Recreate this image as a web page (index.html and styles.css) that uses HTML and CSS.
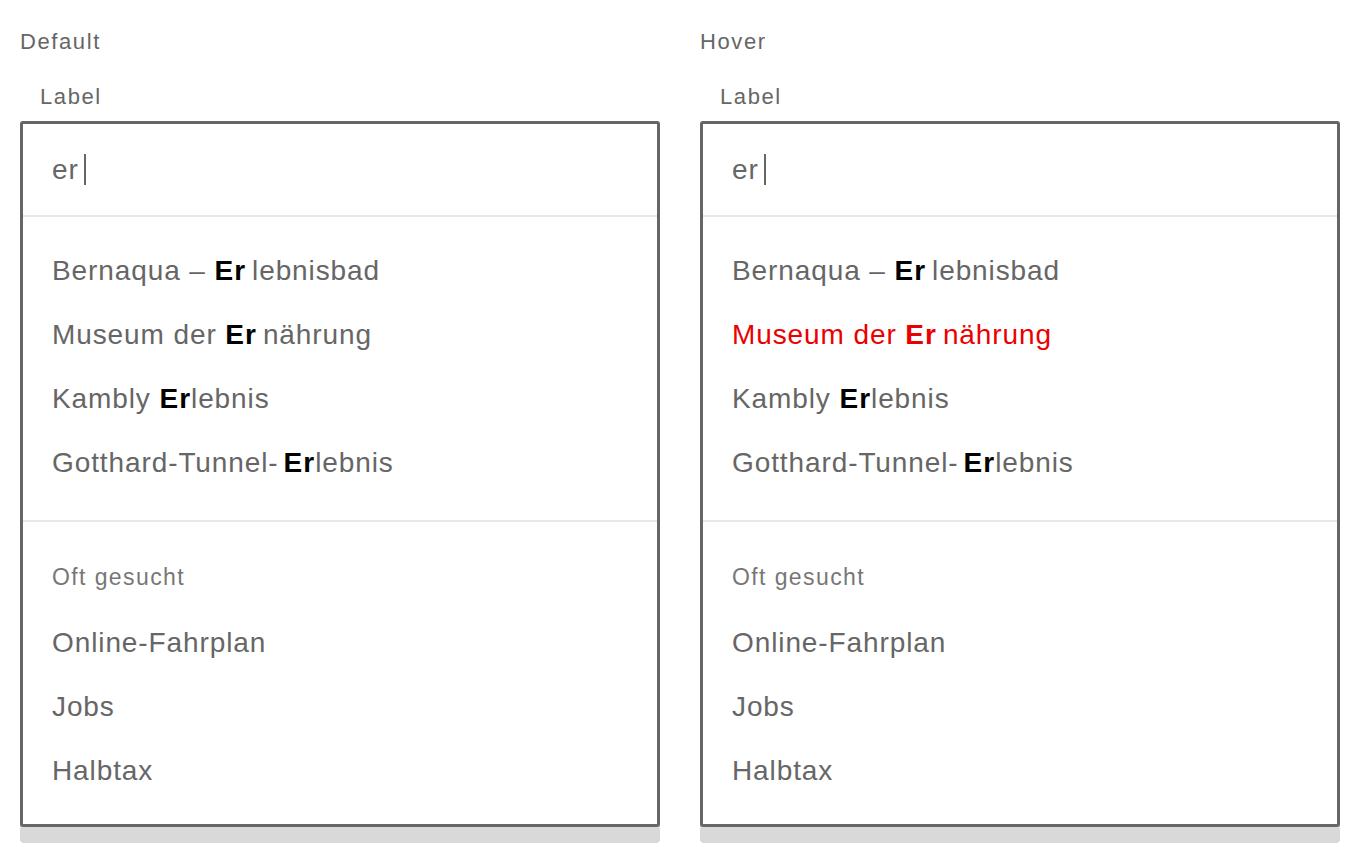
FILE: index.html
```html
<!DOCTYPE html>
<html lang="de">
<head>
<meta charset="utf-8">
<title>Autocomplete</title>
<link rel="stylesheet" href="styles.css">
</head>
<body>
<main class="page">
  <section class="state">
    <div class="state-title">Default</div>
    <div class="field-label">Label</div>
    <div class="box-wrap">
      <div class="box">
        <div class="input-row"><span class="query">er</span><span class="caret"></span></div>
        <ul class="list results">
          <li class="item">Bernaqua – <b class="hl hl-after">Er</b>lebnisbad</li>
          <li class="item">Museum der <b class="hl hl-after">Er</b>nährung</li>
          <li class="item">Kambly <b class="hl">Er</b>lebnis</li>
          <li class="item">Gotthard-Tunnel-<b class="hl hl-before">Er</b>lebnis</li>
        </ul>
        <div class="list frequent">
          <div class="group-title">Oft gesucht</div>
          <ul class="plain">
            <li class="item">Online-Fahrplan</li>
            <li class="item">Jobs</li>
            <li class="item">Halbtax</li>
          </ul>
        </div>
      </div>
    </div>
  </section>
  <section class="state">
    <div class="state-title">Hover</div>
    <div class="field-label">Label</div>
    <div class="box-wrap">
      <div class="box">
        <div class="input-row"><span class="query">er</span><span class="caret"></span></div>
        <ul class="list results">
          <li class="item">Bernaqua – <b class="hl hl-after">Er</b>lebnisbad</li>
          <li class="item is-hover">Museum der <b class="hl hl-after">Er</b>nährung</li>
          <li class="item">Kambly <b class="hl">Er</b>lebnis</li>
          <li class="item">Gotthard-Tunnel-<b class="hl hl-before">Er</b>lebnis</li>
        </ul>
        <div class="list frequent">
          <div class="group-title">Oft gesucht</div>
          <ul class="plain">
            <li class="item">Online-Fahrplan</li>
            <li class="item">Jobs</li>
            <li class="item">Halbtax</li>
          </ul>
        </div>
      </div>
    </div>
  </section>
</main>
</body>
</html>
```

FILE: styles.css
```css
* { box-sizing: border-box; }
html, body { margin: 0; padding: 0; background: #fff; }
body {
  font-family: "Liberation Sans", Arial, Helvetica, sans-serif;
  color: #666;
}
.page {
  display: grid;
  grid-template-columns: 640px 640px;
  column-gap: 40px;
  padding: 29px 20px 0;
}
.state-title {
  font-size: 22px;
  line-height: 26px;
  letter-spacing: 1.6px;
  color: #666;
}
.field-label {
  font-size: 22px;
  line-height: 26px;
  letter-spacing: 1.6px;
  color: #666;
  padding-left: 20px;
  margin-top: 29px;
  margin-bottom: 11px;
}
.box-wrap {
  background: #d9d9d9;
  border-radius: 4px;
  padding-bottom: 16px;
}
.box {
  border: 3px solid #666;
  border-radius: 3px;
  background: #fff;
}
.input-row {
  height: 93px;
  display: flex;
  align-items: center;
  padding-left: 29px;
  border-bottom: 2px solid #e8e8e8;
  font-size: 28px;
  letter-spacing: 0.9px;
  color: #666;
}
.caret {
  display: inline-block;
  width: 2px;
  height: 31px;
  background: #666;
  margin-left: 5px;
}
ul { list-style: none; margin: 0; padding: 0; }
.list { padding-left: 29px; }
.results {
  padding-top: 22px;
  padding-bottom: 25px;
  border-bottom: 2px solid #e8e8e8;
}
.frequent {
  padding-top: 23px;
  padding-bottom: 21px;
}
.group-title {
  height: 66px;
  line-height: 64px;
  font-size: 23px;
  letter-spacing: 1.4px;
  color: #777;
}
.item {
  height: 64px;
  line-height: 64px;
  font-size: 28px;
  letter-spacing: 0.9px;
  color: #666;
  white-space: nowrap;
}
.hl {
  font-weight: bold;
  color: #000;
  letter-spacing: 1px;
}
.hl-after { margin-right: 6px; }
.hl-before { margin-left: 5px; }
.item.is-hover, .item.is-hover .hl { color: #eb0000; }
```
